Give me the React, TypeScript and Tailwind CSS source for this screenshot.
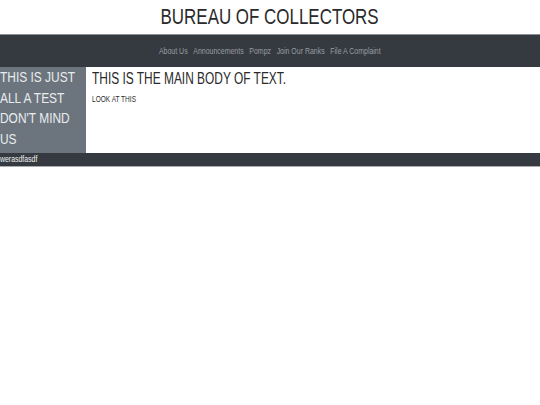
export default function App() {
  const links = ["About Us", "Announcements", "Pompz", "Join Our Ranks", "File A Complaint"]

  return (
    <div className="min-h-screen bg-white font-['Liberation_Sans',Arial,sans-serif]">
      {/* text in the shot is a condensed grotesk, so squeeze it with scale-x */}
      <header className="h-[34px] flex items-center justify-center">
        <h1 className="inline-block scale-x-[0.77] text-[22px] leading-none text-[#2a2a2a]">BUREAU OF COLLECTORS</h1>
      </header>

      <nav className="h-[33px] bg-[#343a40] border-t border-[#8a8d91] flex items-center justify-center">
        <div className="flex gap-[7.5px] scale-x-[0.75] pt-[1px]">
          {links.map((l) => (
            <a key={l} href="#" className="text-[9.3px] leading-none text-[#9a9da1]">
              {l}
            </a>
          ))}
        </div>
      </nav>

      <div className="flex">
        <aside className="w-[86px] h-[86px] shrink-0 bg-[#6c757d] overflow-hidden">
          <div className="w-[108px] origin-top-left scale-x-[0.77] text-[15.5px] leading-[20.5px] text-[#e9ecef]">
            THIS IS JUST ALL A TEST DON'T MIND US
          </div>
        </aside>
        <main className="flex-1 pl-[6px] pt-[1.5px]">
          <h2 className="w-[320px] whitespace-nowrap origin-top-left scale-x-[0.745] text-[16px] leading-[20px] text-[#2a2a2a]">
            THIS IS THE MAIN BODY OF TEXT.
          </h2>
          <p className="mt-[6.5px] w-[80px] whitespace-nowrap origin-top-left scale-x-[0.77] text-[8.5px] leading-none text-[#2a2a2a]">
            LOOK AT THIS
          </p>
        </main>
      </div>

      <footer className="h-[14px] bg-[#343a40] border-b border-[#aaadb0]">
        <div className="w-[60px] origin-top-left scale-x-[0.77] text-[9px] leading-[13px] text-[#f1f1f1]">werasdfasdf</div>
      </footer>
    </div>
  )
}
